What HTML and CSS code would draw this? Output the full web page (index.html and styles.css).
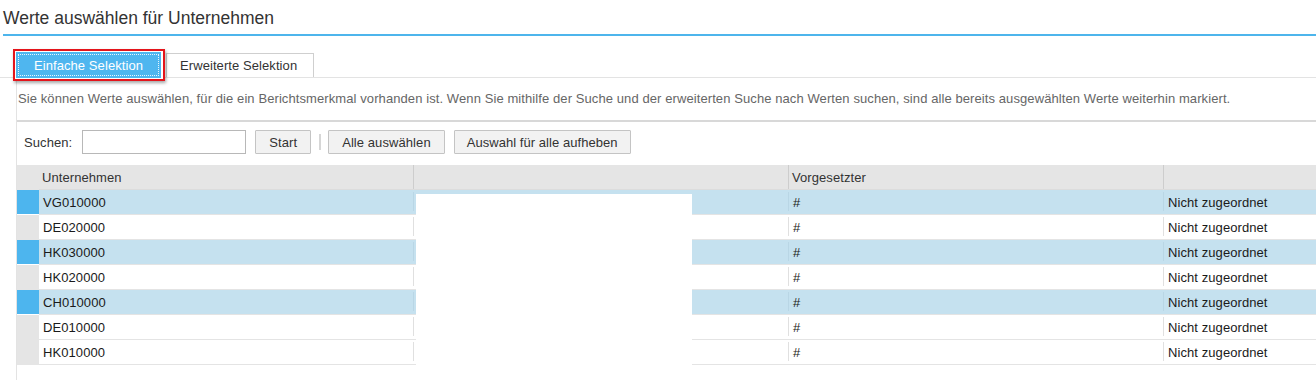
FILE: index.html
```html
<!DOCTYPE html>
<html lang="de">
<head>
<meta charset="utf-8">
<title>Werte auswählen für Unternehmen</title>
<link rel="stylesheet" href="styles.css">
</head>
<body>
<div class="page">
  <div class="title-bar"><h1 class="title">Werte auswählen für Unternehmen</h1></div>

  <div class="tabs">
    <div class="tab-highlight">
      <div class="tab tab-active"><span class="tab-focus">Einfache Selektion</span></div>
    </div>
    <div class="tab">Erweiterte Selektion</div>
  </div>

  <div class="panel">
    <p class="desc">Sie können Werte auswählen, für die ein Berichtsmerkmal vorhanden ist. Wenn Sie mithilfe der Suche und der erweiterten Suche nach Werten suchen, sind alle bereits ausgewählten Werte weiterhin markiert.</p>

    <div class="search">
      <label class="search-label" for="q">Suchen:</label>
      <input class="search-input" id="q" type="text">
      <button class="btn btn-start">Start</button>
      <span class="sep"></span>
      <button class="btn">Alle auswählen</button>
      <button class="btn btn-gap">Auswahl für alle aufheben</button>
    </div>

    <div class="grid">
      <div class="row head">
        <div class="sel"></div>
        <div class="cell">Unternehmen</div>
        <div class="cell sepcell"></div>
        <div class="cell sepcell">Vorgesetzter</div>
        <div class="cell sepcell"></div>
      </div>

      <div class="row selected">
        <div class="sel"></div>
        <div class="cell">VG010000</div>
        <div class="cell sepcell"></div>
        <div class="cell sepcell">#</div>
        <div class="cell sepcell">Nicht zugeordnet</div>
      </div>
      <div class="row">
        <div class="sel"></div>
        <div class="cell">DE020000</div>
        <div class="cell sepcell"></div>
        <div class="cell sepcell">#</div>
        <div class="cell sepcell">Nicht zugeordnet</div>
      </div>
      <div class="row selected">
        <div class="sel"></div>
        <div class="cell">HK030000</div>
        <div class="cell sepcell"></div>
        <div class="cell sepcell">#</div>
        <div class="cell sepcell">Nicht zugeordnet</div>
      </div>
      <div class="row">
        <div class="sel"></div>
        <div class="cell">HK020000</div>
        <div class="cell sepcell"></div>
        <div class="cell sepcell">#</div>
        <div class="cell sepcell">Nicht zugeordnet</div>
      </div>
      <div class="row selected">
        <div class="sel"></div>
        <div class="cell">CH010000</div>
        <div class="cell sepcell"></div>
        <div class="cell sepcell">#</div>
        <div class="cell sepcell">Nicht zugeordnet</div>
      </div>
      <div class="row">
        <div class="sel"></div>
        <div class="cell">DE010000</div>
        <div class="cell sepcell"></div>
        <div class="cell sepcell">#</div>
        <div class="cell sepcell">Nicht zugeordnet</div>
      </div>
      <div class="row">
        <div class="sel"></div>
        <div class="cell">HK010000</div>
        <div class="cell sepcell"></div>
        <div class="cell sepcell">#</div>
        <div class="cell sepcell">Nicht zugeordnet</div>
      </div>

      <div class="redact"></div>
    </div>
  </div>
</div>
</body>
</html>
```

FILE: styles.css
```css
* { box-sizing: border-box; }

html, body {
  margin: 0;
  padding: 0;
  background: #fff;
  overflow: hidden;
}

body {
  width: 1316px;
  height: 380px;
  font-family: "Liberation Sans", Arial, sans-serif;
  font-size: 13px;
  letter-spacing: 0.08px;
  color: #333;
}

.page {
  display: flex;
  flex-direction: column;
  height: 380px;
}

/* Title */
.title-bar {
  margin-left: 3px;
  padding-top: 3px;
  border-bottom: 2px solid #4db5ec;
}

.title {
  margin: 0;
  font-size: 17.5px;
  font-weight: normal;
  line-height: 31px;
  letter-spacing: 0;
  color: #333;
}

/* Tabs */
.tabs {
  display: flex;
  align-items: flex-end;
  margin-top: 13px;
  padding-left: 13px;
  height: 29px;
  border-bottom: 1px solid #e3e3e3;
}

.tab-highlight {
  border: 2px solid #e4141b;
  padding: 1px 2px 1px 1px;
  margin-bottom: -4px;
  box-shadow: 1px 2px 3px rgba(0, 0, 0, 0.35);
  position: relative;
  z-index: 1;
  background: #fff;
}

.tab {
  height: 24px;
  display: flex;
  align-items: center;
  padding: 0 16px 0 13px;
  margin-left: 1px;
  border: 1px solid #cfcfcf;
  border-bottom: none;
  background: #fff;
  color: #333;
  white-space: nowrap;
}

.tab-active {
  margin-left: 0;
  width: 145px;
  height: 26px;
  padding: 2px;
  border: none;
  background: #4fb6ef;
  color: #fff;
}

.tab-focus {
  flex: 1;
  height: 100%;
  display: flex;
  align-items: center;
  justify-content: center;
  border: 1px dotted #e8f6ff;
}

/* Panel */
.panel {
  flex: 1;
  margin-left: 16px;
  border-left: 1px solid #e3e3e3;
}

.desc {
  margin: 0;
  padding-left: 1px;
  height: 44px;
  line-height: 42px;
  border-bottom: 2px solid #d8d8d8;
  color: #666;
  letter-spacing: 0.09px;
  white-space: nowrap;
  overflow: hidden;
}

.search {
  display: flex;
  align-items: center;
  padding: 8px 0 11px 7px;
}

.search-label {
  margin-right: 10px;
  color: #333;
}

.search-input {
  width: 164px;
  height: 24px;
  border: 1px solid #b8b8b8;
  background: #fff;
  margin: 0;
  padding: 0 4px;
}

.btn {
  height: 24px;
  padding: 0 13px;
  margin: 0;
  border: 1px solid #c4c4c4;
  border-radius: 1px;
  background: #f2f2f2;
  font-family: inherit;
  font-size: 13px;
  letter-spacing: 0.08px;
  color: #333;
}

.btn-start { margin-left: 9px; padding: 0 13px; }
.btn-gap { margin-left: 9px; padding: 0 12px; letter-spacing: 0.05px; }

.sep {
  width: 2px;
  height: 16px;
  margin: 0 7px 0 8px;
  background: #d6d6d6;
}

/* Grid */
.grid {
  position: relative;
}

.row {
  display: grid;
  grid-template-columns: 22px 374px 375px 375px 1fr;
  height: 25px;
  color: #1a1a1a;
}

.row .cell {
  position: relative;
  display: flex;
  align-items: center;
  padding-left: 4px;
  border-bottom: 1px solid #e4e4e4;
  white-space: nowrap;
}

.row .sel {
  background: #e5e5e5;
}

.row .sepcell {
  padding-left: 5px;
}

.row .sepcell::before {
  content: "";
  position: absolute;
  left: 0;
  top: 2px;
  bottom: 3px;
  width: 1px;
  background: #e0e0e0;
}

.row.selected .cell {
  background: #c5e1ef;
}

.row.selected .sepcell::before {
  background: #b9d6e5;
}

.row.selected .sel {
  background: #4db5ee;
  border-bottom: 1px solid #fff;
}

.row.head {
  background: #e5e5e5;
  color: #333;
}

.row.head .sel { background: transparent; }

.row.head .cell {
  padding-left: 3px;
  border-bottom: 1px solid #dcdcdc;
}

.row.head .sepcell {
  padding-left: 4px;
}

.row.head .sepcell::before {
  top: 0;
  bottom: 0;
  background: #cdcdcd;
}

.redact {
  position: absolute;
  left: 399px;
  top: 29px;
  width: 276px;
  height: 171px;
  background: #fff;
}
```
